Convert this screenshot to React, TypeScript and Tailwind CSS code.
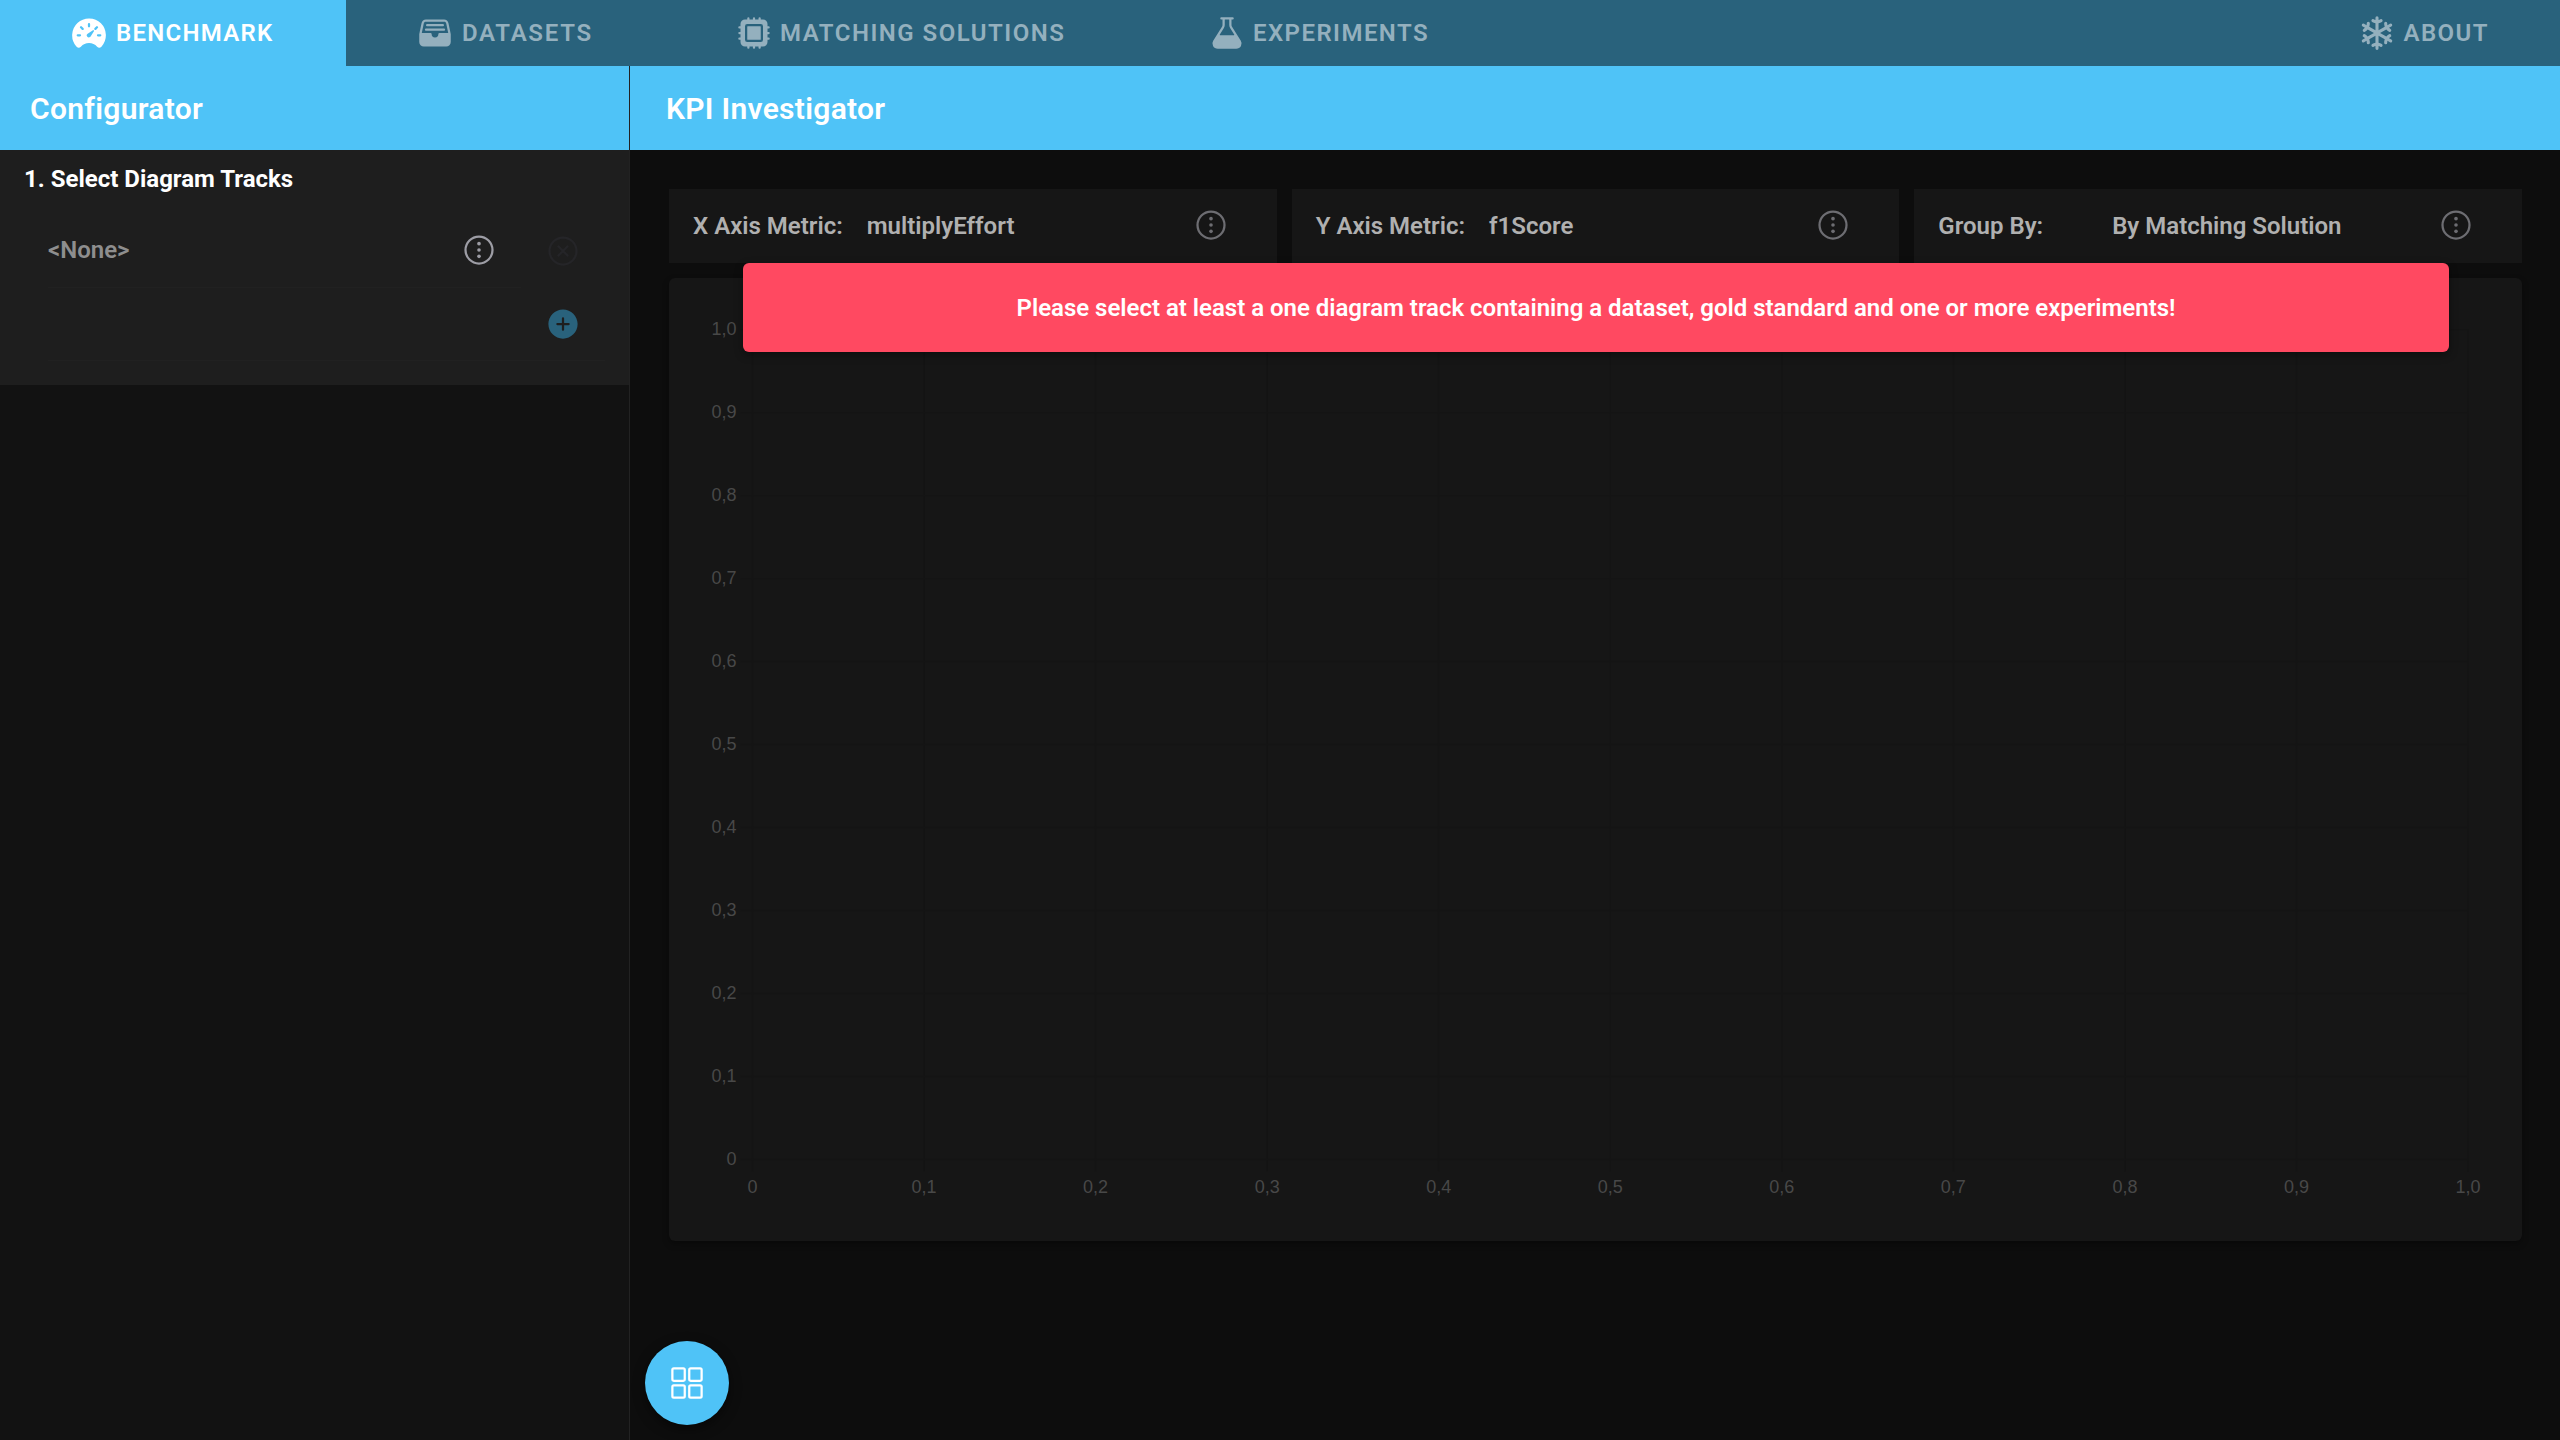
import React from "react";
import {
  IoSpeedometer,
  IoFileTrayFull,
  IoHardwareChip,
  IoFlask,
  IoSnow,
  IoAddCircle,
  IoCloseCircleOutline,
  IoGridOutline,
} from "react-icons/io5";

const steps = [0, 1, 2, 3, 4, 5, 6, 7, 8, 9, 10];
const label = (i: number) => (i === 0 ? "0" : i === 10 ? "1,0" : `0,${i}`);

const X0 = 83.5;
const DX = 171.55;
const Y0 = 881.5;
const DY = 82.98;

function EllipsisCircle({ className }: { className: string }) {
  return (
    <svg viewBox="0 0 512 512" className={className} fill="currentColor">
      <circle cx="256" cy="256" r="26" />
      <circle cx="256" cy="346" r="26" />
      <circle cx="256" cy="166" r="26" />
      <path d="M448 256c0-106-86-192-192-192S64 150 64 256s86 192 192 192 192-86 192-192z" fill="none" stroke="currentColor" strokeMiterlimit="10" strokeWidth="32" />
    </svg>
  );
}

function Tab({ icon, text, className }: { icon: React.ReactNode; text: string; className: string }) {
  return (
    <div className={`flex h-[66px] items-center text-2xl font-semibold ${className}`}>
      {icon}
      <span className="whitespace-nowrap">{text}</span>
    </div>
  );
}

function Metric({ name, value, valueClass }: { name: string; value: string; valueClass: string }) {
  return (
    <div className="flex h-[74px] items-center bg-[#161616] pr-[48px] pl-6 text-2xl font-semibold text-[#b0b0b0]">
      <span className="whitespace-nowrap">{name}</span>
      <span className={`flex-1 whitespace-nowrap ${valueClass}`}>{value}</span>
      <EllipsisCircle className="mb-[2px] size-9 text-[#6d6d72]" />
    </div>
  );
}

function Chart() {
  return (
    <svg width="1853" height="963" className="block font-['Liberation_Sans',sans-serif] text-[18px]">
      <g stroke="#141414" strokeWidth="1.5">
        {steps.map((i) => (
          <line key={`v${i}`} x1={X0 + i * DX} x2={X0 + i * DX} y1={Y0 - 10 * DY} y2={Y0 + 12} />
        ))}
        {steps.map((i) => (
          <line key={`h${i}`} x1={X0 - 12} x2={X0 + 10 * DX} y1={Y0 - i * DY} y2={Y0 - i * DY} />
        ))}
      </g>
      <g fill="#484848">
        {steps.map((i) => (
          <text key={`x${i}`} x={X0 + i * DX} y="915" textAnchor="middle">{label(i)}</text>
        ))}
        {steps.map((i) => (
          <text key={`y${i}`} x="67.5" y={Y0 - i * DY + 5.2} textAnchor="end">{label(i)}</text>
        ))}
      </g>
    </svg>
  );
}

export default function App() {
  return (
    <div className="flex h-[1440px] w-[2560px] flex-col overflow-hidden bg-[#0d0d0d] font-['Roboto',sans-serif]">
      <nav className="flex h-[66px] shrink-0 bg-[#29627c] text-[#94b0be]">
        <Tab className="w-[346px] bg-[#4fc3f7] pl-[71px] tracking-[1.25px] text-white" icon={<IoSpeedometer className="mr-[9px] size-9" />} text="BENCHMARK" />
        <Tab className="w-[320px] pl-[71px] tracking-[1.7px]" icon={<IoFileTrayFull className="mr-[9px] size-9" />} text="DATASETS" />
        <Tab className="w-[473px] pl-[70px] tracking-[1.5px]" icon={<IoHardwareChip className="mr-2 size-9" />} text="MATCHING SOLUTIONS" />
        <Tab className="pl-[70px] tracking-[1.44px]" icon={<IoFlask className="mr-2 size-9" />} text="EXPERIMENTS" />
        <Tab className="ml-auto pr-[71px] tracking-[1.44px]" icon={<IoSnow className="mr-2 size-9" />} text="ABOUT" />
      </nav>

      <div className="flex min-h-0 flex-1">
        <aside className="flex w-[630px] shrink-0 flex-col border-r border-[#222222] bg-[#121212]">
          <header className="flex h-[84px] shrink-0 items-center bg-[#4fc3f7] pl-[30px] text-[30px] font-semibold tracking-[0.3px] text-white">Configurator</header>
          <section className="h-[235px] bg-[#1e1e1e]">
            <h2 className="flex h-[58px] items-center pl-6 text-2xl font-bold text-white">1. Select Diagram Tracks</h2>
            <div className="flex h-20 pl-12">
              <div className="flex w-[473px] items-center border-b border-[#212121] pt-[5px] pr-6">
                <span className="flex-1 text-2xl font-semibold text-[#8e8e8e]">&lt;None&gt;</span>
                <EllipsisCircle className="size-9 text-[#9d9da5]" />
              </div>
              <IoCloseCircleOutline className="mt-[25px] ml-[24px] size-9 text-[#252528]" />
            </div>
            <div className="ml-12 flex h-[73px] w-[557px] items-center justify-end border-b border-[#212121] pr-6">
              <IoAddCircle className="size-9 text-[#29627c]" />
            </div>
          </section>
        </aside>

        <main className="relative flex flex-1 flex-col">
          <header className="flex h-[84px] shrink-0 items-center bg-[#4fc3f7] pl-9 text-[30px] font-semibold tracking-[0.3px] text-white">KPI Investigator</header>
          <div className="flex flex-col gap-[15px] pt-[39px] pr-[38px] pl-[39px]">
            <div className="grid grid-cols-3 gap-[15px]">
              <Metric name="X Axis Metric:" value="multiplyEffort" valueClass="pl-6" />
              <Metric name="Y Axis Metric:" value="f1Score" valueClass="pl-6" />
              <Metric name="Group By:" value="By Matching Solution" valueClass="pl-[69px]" />
            </div>
            <div className="h-[963px] rounded-md bg-[#161616] shadow-[0_3px_6px_rgba(0,0,0,0.35)]">
              <Chart />
            </div>
          </div>

          <div className="absolute top-[197px] left-[113px] flex h-[89px] w-[1706px] items-center justify-center rounded-md bg-[#ff4961] text-2xl font-semibold tracking-[-0.015px] text-white shadow-[0_3px_8px_rgba(0,0,0,0.4)]">
            Please select at least a one diagram track containing a dataset, gold standard and one or more experiments!
          </div>

          <button className="absolute bottom-[15px] left-[15px] flex size-[84px] items-center justify-center rounded-full bg-[#4fc3f7] text-white shadow-[0_4px_12px_rgba(0,0,0,0.5)]">
            <IoGridOutline className="size-9" />
          </button>
        </main>
      </div>
    </div>
  );
}
